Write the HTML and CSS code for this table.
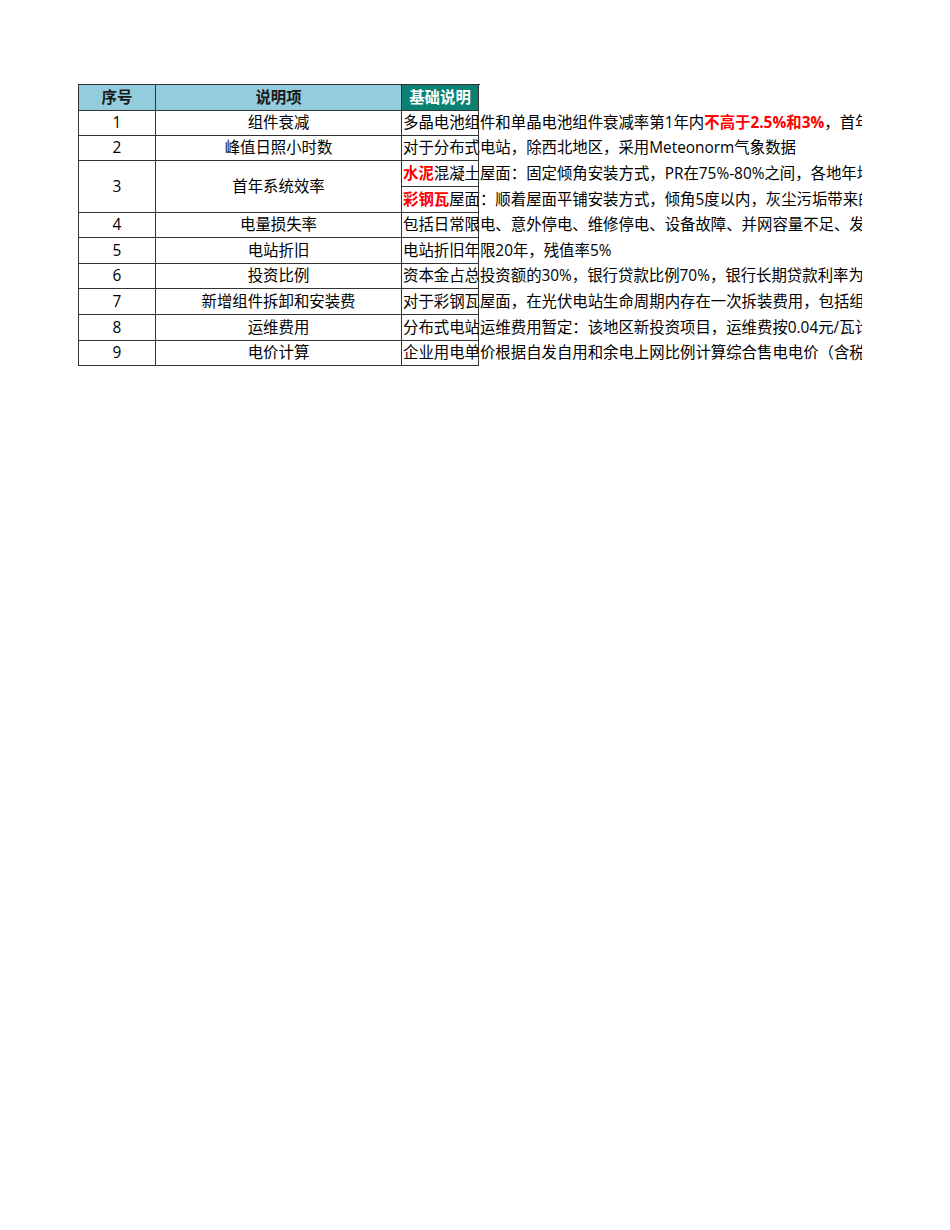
FILE: index.html
```html
<!DOCTYPE html>
<html lang="zh-CN">
<head>
<meta charset="utf-8">
<title>基础说明</title>
<link rel="stylesheet" href="styles.css">
</head>
<body>
<div class="page">
  <div class="clip">
    <div class="sheet">
      <div class="cell head">序号</div>
      <div class="cell head">说明项</div>
      <div class="cell desc head-teal">基础说明</div>

      <div class="cell num">1</div>
      <div class="cell item">组件衰减</div>
      <div class="cell desc">多晶电池组件和单晶电池组件衰减率第1年内<b class="red">不高于2.5%和3%</b>，首年后每年衰减率不高于0.7%，25年内衰减率不高于20%</div>

      <div class="cell num">2</div>
      <div class="cell item">峰值日照小时数</div>
      <div class="cell desc">对于分布式电站，除西北地区，采用Meteonorm气象数据</div>

      <div class="cell num span2">3</div>
      <div class="cell item span2">首年系统效率</div>
      <div class="cell desc"><b class="red">水泥</b>混凝土屋面：固定倾角安装方式，PR在75%-80%之间，各地年均温度不同</div>
      <div class="cell desc"><b class="red">彩钢瓦</b>屋面：顺着屋面平铺安装方式，倾角5度以内，灰尘污垢带来的损失较大</div>

      <div class="cell num">4</div>
      <div class="cell item">电量损失率</div>
      <div class="cell desc">包括日常限电、意外停电、维修停电、设备故障、并网容量不足、发电量计量误差等</div>

      <div class="cell num">5</div>
      <div class="cell item">电站折旧</div>
      <div class="cell desc">电站折旧年限20年，残值率5%</div>

      <div class="cell num">6</div>
      <div class="cell item">投资比例</div>
      <div class="cell desc">资本金占总投资额的30%，银行贷款比例70%，银行长期贷款利率为基准利率</div>

      <div class="cell num">7</div>
      <div class="cell item">新增组件拆卸和安装费</div>
      <div class="cell desc">对于彩钢瓦屋面，在光伏电站生命周期内存在一次拆装费用，包括组件拆卸和安装</div>

      <div class="cell num">8</div>
      <div class="cell item">运维费用</div>
      <div class="cell desc">分布式电站运维费用暂定：该地区新投资项目，运维费按0.04元/瓦计算</div>

      <div class="cell num">9</div>
      <div class="cell item">电价计算</div>
      <div class="cell desc">企业用电单价根据自发自用和余电上网比例计算综合售电电价（含税）</div>
    </div>
  </div>
</div>
</body>
</html>
```

FILE: styles.css
```css
html, body {
  margin: 0;
  padding: 0;
  background: #ffffff;
}

body {
  font-family: "Open Sans", "Noto Sans CJK SC", sans-serif;
  font-size: 15.4px;
  color: #000000;
}

.page {
  padding: 84px 0 0 78px;
}

.clip {
  width: 784px;
  overflow: hidden;
}

.sheet {
  display: grid;
  grid-template-columns: 77px 246px 77px;
  grid-template-rows: 26px 25px 25px 26px 26px 25px 26px 25px 26px 26px 25px;
  width: 401px;
  border-left: 1px solid #333333;
  border-top: 1px solid #333333;
}

.cell {
  box-sizing: border-box;
  border-right: 1px solid #333333;
  border-bottom: 1px solid #333333;
  display: flex;
  align-items: center;
  justify-content: center;
  white-space: nowrap;
  line-height: 1;
}

.span2 {
  grid-row: span 2;
}

.head {
  background: #93cddd;
  font-weight: bold;
  color: #1a1a1a;
}

.desc {
  position: relative;
  justify-content: flex-start;
  padding-left: 1px;
  border-right-color: transparent;
  overflow: visible;
}

.desc.head-teal {
  background: #0b8174;
  color: #ffffff;
  font-weight: bold;
  justify-content: center;
  padding-left: 0;
}

.desc::after {
  content: "";
  position: absolute;
  top: 0;
  bottom: -1px;
  right: -1px;
  width: 1px;
  background: #333333;
  z-index: 1;
}

.red {
  color: #ff0000;
  font-weight: bold;
}
```
